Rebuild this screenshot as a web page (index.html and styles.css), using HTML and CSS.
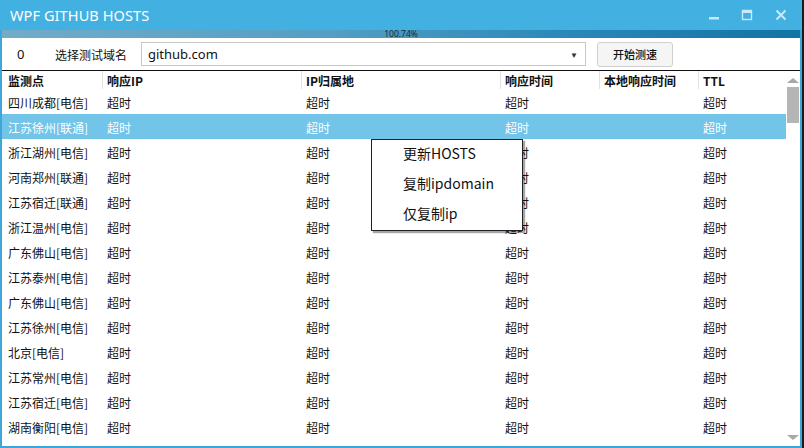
FILE: index.html
```html
<!DOCTYPE html>
<html lang="zh">
<head>
<meta charset="utf-8">
<title>WPF GITHUB HOSTS</title>
<link rel="stylesheet" href="styles.css">
</head>
<body>
<div class="window">
  <div class="titlebar">
    <div class="title">WPF GITHUB HOSTS</div>
    <div class="controls">
      <span class="ctl"><svg width="12" height="12" viewBox="0 0 12 12"><rect x="1" y="8" width="10" height="2.5" fill="#c9e9f8"/></svg></span>
      <span class="ctl"><svg width="12" height="12" viewBox="0 0 12 12"><rect x="1.5" y="1.5" width="9" height="9" fill="none" stroke="#c9e9f8" stroke-width="1.4"/><rect x="1.5" y="1.5" width="9" height="2.5" fill="#c9e9f8"/></svg></span>
      <span class="ctl"><svg width="12" height="12" viewBox="0 0 12 12"><path d="M1.5 1.5 L10.5 10.5 M10.5 1.5 L1.5 10.5" stroke="#c9e9f8" stroke-width="2"/></svg></span>
    </div>
  </div>
  <div class="progress"><span>100.74%</span></div>
  <div class="toolbar">
    <span class="count">0</span>
    <span class="label">选择测试域名</span>
    <div class="combo"><span>github.com</span><span class="arrow">▼</span></div>
    <button class="btn">开始测速</button>
  </div>
  <div class="grid">
    <div class="table">
      <div class="row head">
        <div class="c c1">监测点</div><div class="c c2">响应IP</div><div class="c c3">IP归属地</div><div class="c c4">响应时间</div><div class="c c5">本地响应时间</div><div class="c c6">TTL</div>
      </div>
      <div class="row"><div class="c c1">四川成都[电信]</div><div class="c c2">超时</div><div class="c c3">超时</div><div class="c c4">超时</div><div class="c c5"></div><div class="c c6">超时</div></div>
      <div class="row sel"><div class="c c1">江苏徐州[联通]</div><div class="c c2">超时</div><div class="c c3">超时</div><div class="c c4">超时</div><div class="c c5"></div><div class="c c6">超时</div></div>
      <div class="row"><div class="c c1">浙江湖州[电信]</div><div class="c c2">超时</div><div class="c c3">超时</div><div class="c c4">超时</div><div class="c c5"></div><div class="c c6">超时</div></div>
      <div class="row"><div class="c c1">河南郑州[联通]</div><div class="c c2">超时</div><div class="c c3">超时</div><div class="c c4">超时</div><div class="c c5"></div><div class="c c6">超时</div></div>
      <div class="row"><div class="c c1">江苏宿迁[联通]</div><div class="c c2">超时</div><div class="c c3">超时</div><div class="c c4">超时</div><div class="c c5"></div><div class="c c6">超时</div></div>
      <div class="row"><div class="c c1">浙江温州[电信]</div><div class="c c2">超时</div><div class="c c3">超时</div><div class="c c4">超时</div><div class="c c5"></div><div class="c c6">超时</div></div>
      <div class="row"><div class="c c1">广东佛山[电信]</div><div class="c c2">超时</div><div class="c c3">超时</div><div class="c c4">超时</div><div class="c c5"></div><div class="c c6">超时</div></div>
      <div class="row"><div class="c c1">江苏泰州[电信]</div><div class="c c2">超时</div><div class="c c3">超时</div><div class="c c4">超时</div><div class="c c5"></div><div class="c c6">超时</div></div>
      <div class="row"><div class="c c1">广东佛山[电信]</div><div class="c c2">超时</div><div class="c c3">超时</div><div class="c c4">超时</div><div class="c c5"></div><div class="c c6">超时</div></div>
      <div class="row"><div class="c c1">江苏徐州[电信]</div><div class="c c2">超时</div><div class="c c3">超时</div><div class="c c4">超时</div><div class="c c5"></div><div class="c c6">超时</div></div>
      <div class="row"><div class="c c1">北京[电信]</div><div class="c c2">超时</div><div class="c c3">超时</div><div class="c c4">超时</div><div class="c c5"></div><div class="c c6">超时</div></div>
      <div class="row"><div class="c c1">江苏常州[电信]</div><div class="c c2">超时</div><div class="c c3">超时</div><div class="c c4">超时</div><div class="c c5"></div><div class="c c6">超时</div></div>
      <div class="row"><div class="c c1">江苏宿迁[电信]</div><div class="c c2">超时</div><div class="c c3">超时</div><div class="c c4">超时</div><div class="c c5"></div><div class="c c6">超时</div></div>
      <div class="row"><div class="c c1">湖南衡阳[电信]</div><div class="c c2">超时</div><div class="c c3">超时</div><div class="c c4">超时</div><div class="c c5"></div><div class="c c6">超时</div></div>
    </div>
    <div class="scrollbar">
      <div class="up"></div>
      <div class="thumb"></div>
      <div class="track"></div>
      <div class="down"></div>
    </div>
  </div>
  <div class="menu">
    <div class="item">更新HOSTS</div>
    <div class="item">复制ipdomain</div>
    <div class="item">仅复制ip</div>
  </div>
</div>
</body>
</html>
```
FILE: styles.css
```css
html, body {
  margin: 0;
  padding: 0;
}
body {
  width: 804px;
  height: 448px;
  background: #1c1c1c;
  overflow: hidden;
  font-family: "Noto Sans", "Noto Sans CJK SC", sans-serif;
  color: #111;
}
.window {
  position: relative;
  width: 798px;
  height: 446px;
  border: 2px solid #3ea6d8;
  border-top: 0;
  background: #fff;
  display: flex;
  flex-direction: column;
}
.titlebar {
  height: 30px;
  margin: 0 -2px;
  background: #42b0e1;
  display: flex;
  align-items: center;
  justify-content: space-between;
}
.title {
  color: #fff;
  font-size: 14.5px;
  padding-left: 10px;
  letter-spacing: 0.1px;
  line-height: 30px;
}
.controls {
  display: flex;
  height: 30px;
  align-items: flex-start;
}
.ctl {
  width: 34px;
  height: 30px;
  display: flex;
  align-items: center;
  justify-content: center;
}
.controls .ctl:nth-child(1) { margin-right: -1px; }
.controls .ctl:nth-child(3) { margin-right: 4px; }
.progress {
  height: 8px;
  background: linear-gradient(to right, #72acc8 0%, #559fc4 40%, #2b89b8 70%, #1273a5 100%);
  display: flex;
  align-items: center;
  justify-content: center;
  font-size: 8.5px;
  line-height: 8px;
  color: #1a2a38;
}
.toolbar {
  height: 32px;
  display: flex;
  align-items: center;
  font-size: 12px;
  font-family: "Noto Sans CJK SC", sans-serif;
}
.count {
  width: 22px;
  padding-left: 15px;
  font-family: "Noto Sans", sans-serif;
  font-size: 13px;
}
.label {
  margin-left: 16px;
  width: 86px;
}
.combo {
  width: 445px;
  height: 24px;
  border: 1px solid #c8c8c8;
  box-sizing: border-box;
  display: flex;
  align-items: center;
  justify-content: space-between;
  padding: 0 7px 0 6px;
  font-family: "Noto Sans", sans-serif;
  font-size: 13px;
}
.arrow {
  font-size: 8px;
  color: #333;
}
.btn {
  margin-left: 11px;
  width: 76px;
  height: 25px;
  border: 1px solid #cfcfcf;
  border-radius: 3px;
  background: #f5f5f5;
  font-family: "Noto Sans CJK SC", sans-serif;
  font-size: 11px;
  font-weight: 500;
  color: #111;
  padding: 0;
}
.grid {
  flex: 1;
  display: flex;
  border-top: 1.5px solid #111;
  min-height: 0;
}
.table {
  width: 784px;
  font-family: "Noto Sans CJK SC", sans-serif;
  font-size: 12px;
}
.row {
  display: flex;
  height: 25px;
  align-items: center;
}
.row.head {
  height: 18px;
  font-weight: bold;
  align-items: stretch;
}
.row.head .c {
  border-right: 1px solid #e2e2e2;
  display: flex;
  align-items: center;
}
.row.head .c6 { border-right: 0; }
.row.sel {
  background: #72c4e8;
  color: #fff;
}
.c { box-sizing: border-box; white-space: nowrap; }
.c1 { width: 101px; padding-left: 6px; }
.c2 { width: 199px; padding-left: 4px; }
.c3 { width: 199px; padding-left: 4px; }
.c4 { width: 99px; padding-left: 4px; }
.c5 { width: 99px; padding-left: 4px; }
.c6 { width: 87px; padding-left: 4px; }
.row:not(.head) .c { padding-top: 2px; }
.scrollbar {
  width: 14px;
  display: flex;
  flex-direction: column;
  align-items: center;
}
.up {
  width: 0; height: 0;
  margin-top: 7px;
  border-left: 6px solid transparent;
  border-right: 6px solid transparent;
  border-bottom: 5px solid #a8a8a8;
}
.thumb {
  margin-top: 4px;
  width: 12px;
  height: 36px;
  background: #b5b5b5;
}
.track { flex: 1; }
.down {
  width: 0; height: 0;
  margin-bottom: 6px;
  border-left: 6px solid transparent;
  border-right: 6px solid transparent;
  border-top: 5px solid #a8a8a8;
}
.menu {
  position: absolute;
  left: 369px;
  top: 139px;
  width: 150px;
  background: #fff;
  border: 1px solid #222;
  box-shadow: 2px 2px 1px rgba(0,0,0,0.35);
  font-family: "Noto Sans CJK SC", sans-serif;
  font-size: 14px;
}
.item {
  height: 30px;
  line-height: 27px;
  padding-left: 31px;
  color: #111;
}
```
